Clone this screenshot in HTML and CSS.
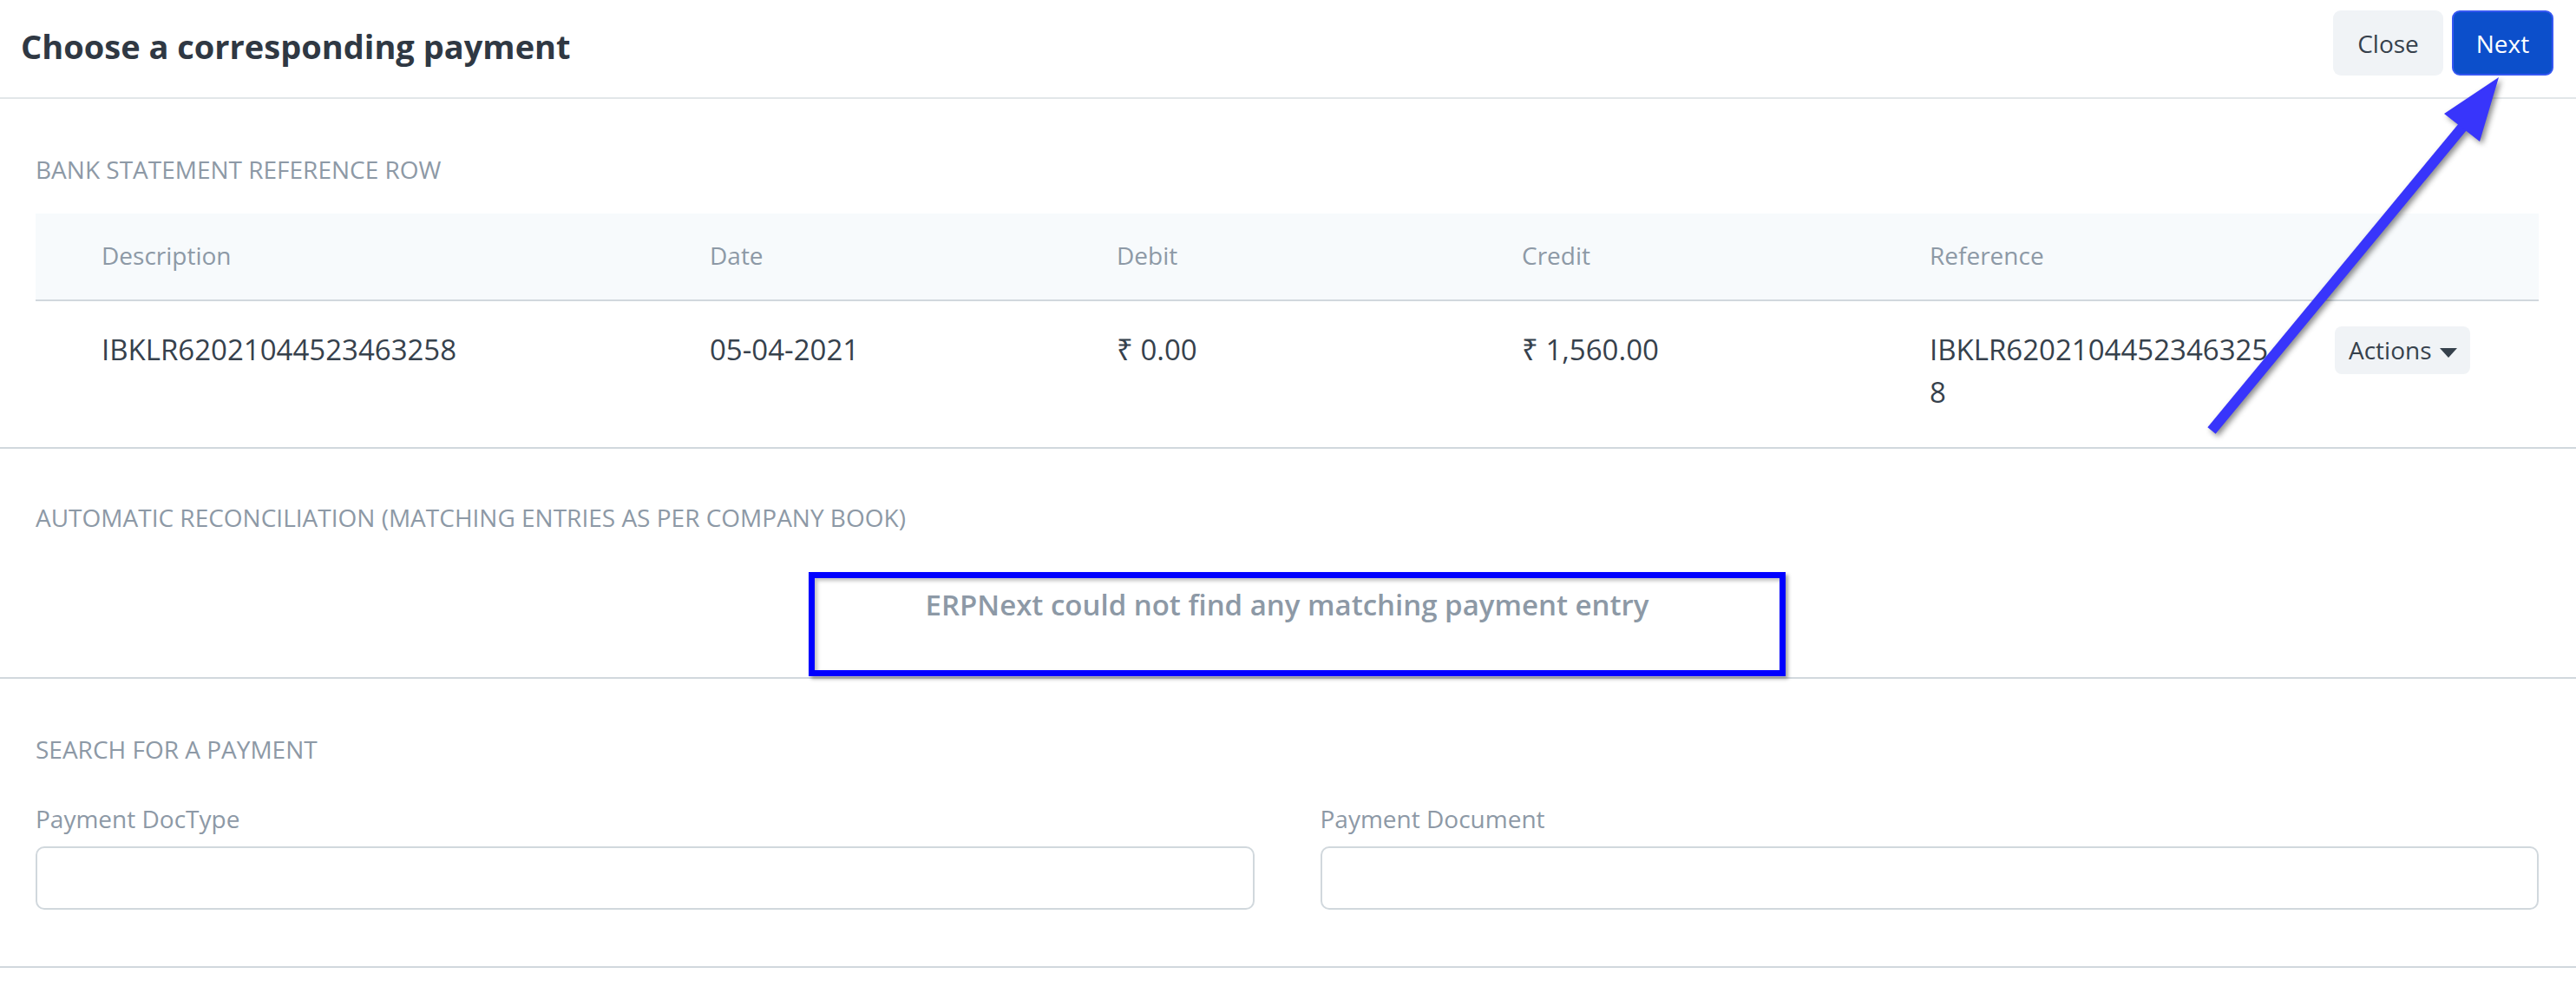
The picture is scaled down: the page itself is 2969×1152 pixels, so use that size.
FILE: index.html
```html
<!DOCTYPE html>
<html lang="en">
<head>
<meta charset="utf-8">
<title>Choose a corresponding payment</title>
<link rel="stylesheet" href="styles.css">
</head>
<body>
<div class="modal">
  <header class="modal-header">
    <h1 class="modal-title">Choose a corresponding payment</h1>
    <div class="header-actions">
      <button class="btn btn-secondary">Close</button>
      <button class="btn btn-primary">Next</button>
    </div>
  </header>

  <section class="section section-statement">
    <div class="section-label">BANK STATEMENT REFERENCE ROW</div>
    <div class="dt">
      <div class="dt-head">
        <div class="dt-cell">Description</div>
        <div class="dt-cell">Date</div>
        <div class="dt-cell">Debit</div>
        <div class="dt-cell">Credit</div>
        <div class="dt-cell">Reference</div>
        <div class="dt-cell"></div>
      </div>
      <div class="dt-row">
        <div class="dt-cell">IBKLR62021044523463258</div>
        <div class="dt-cell">05-04-2021</div>
        <div class="dt-cell">₹ 0.00</div>
        <div class="dt-cell">₹ 1,560.00</div>
        <div class="dt-cell dt-ref">IBKLR62021044523463258</div>
        <div class="dt-cell dt-actions">
          <button class="btn-actions">Actions<span class="caret"></span></button>
        </div>
      </div>
    </div>
  </section>

  <section class="section section-auto">
    <div class="section-label">AUTOMATIC RECONCILIATION (MATCHING ENTRIES AS PER COMPANY BOOK)</div>
    <div class="empty-msg">ERPNext could not find any matching payment entry</div>
    <div class="highlight-box"></div>
  </section>

  <section class="section section-search">
    <div class="section-label">SEARCH FOR A PAYMENT</div>
    <div class="fields">
      <div class="field">
        <div class="field-label">Payment DocType</div>
        <div class="input"></div>
      </div>
      <div class="field">
        <div class="field-label">Payment Document</div>
        <div class="input"></div>
      </div>
    </div>
  </section>

  <svg class="annotation-arrow" viewBox="2530 70 370 450" width="370" height="450" xmlns="http://www.w3.org/2000/svg">
    <line x1="2549" y1="496" x2="2841" y2="143" stroke="#3835fb" stroke-width="12" stroke-linecap="butt"/>
    <polygon points="2880,89 2817,131 2858,163" fill="#3835fb"/>
  </svg>
</div>
</body>
</html>
```

FILE: styles.css
```css
* {
  box-sizing: border-box;
}

body {
  margin: 0;
  background: #ffffff;
  font-family: "Open Sans", "Noto Sans", "DejaVu Sans", sans-serif;
  color: #36414c;
}

.modal {
  position: relative;
  width: 2969px;
  min-height: 1152px;
}

.modal-header {
  display: flex;
  justify-content: space-between;
  align-items: flex-start;
  height: 114px;
  padding: 0 26px 0 24px;
  border-bottom: 2px solid #e2e6e9;
}

.modal-title {
  margin: 27px 0 0;
  font-size: 38px;
  font-weight: 700;
  line-height: 52px;
  color: #2f3843;
}

.header-actions {
  display: flex;
  gap: 10px;
  margin-top: 12px;
}

.btn {
  height: 75px;
  padding: 0;
  font-family: inherit;
  font-size: 28px;
  line-height: 1;
  border-radius: 9px;
  border: 2px solid transparent;
}

.btn-secondary {
  width: 127px;
  background: #f0f3f6;
  color: #36414c;
}

.btn-primary {
  width: 117px;
  background: #0c4fcb;
  border-color: #3557f2;
  color: #ffffff;
}

.section {
  position: relative;
  padding: 0 43px 0 41px;
  border-bottom: 2px solid #d1d8dd;
}

.section-label {
  font-size: 28px;
  line-height: 40px;
  color: #8d99a6;
}

/* bank statement section */
.section-statement {
  padding-top: 61px;
}

.section-statement .section-label {
  margin-bottom: 31px;
}

.dt-head,
.dt-row {
  display: grid;
  grid-template-columns: 701px 469px 467px 470px 474px 304px;
}

.dt-head {
  height: 101px;
  background: #f7fafc;
  border-bottom: 2px solid #d1d8dd;
}

.dt-head .dt-cell {
  padding: 28px 0 0 76px;
  font-size: 28px;
  line-height: 40px;
  color: #8d99a6;
}

.dt-row {
  height: 168px;
}

.dt-row .dt-cell {
  padding: 31px 0 0 76px;
  font-size: 33px;
  line-height: 49px;
  color: #36414c;
}

.dt-row .dt-ref {
  word-break: break-all;
}

.dt-row .dt-actions {
  padding: 29px 0 0 69px;
}

.btn-actions {
  display: inline-flex;
  align-items: center;
  height: 55px;
  padding: 0 15px 0 16px;
  border: none;
  border-radius: 8px;
  background: #f0f3f6;
  font-family: inherit;
  font-size: 28px;
  line-height: 55px;
  color: #36414c;
}

.caret {
  display: inline-block;
  width: 0;
  height: 0;
  margin: 6px 0 0 9px;
  border-left: 10px solid transparent;
  border-right: 10px solid transparent;
  border-top: 11px solid #36414c;
}

/* automatic reconciliation section */
.section-auto {
  padding-top: 59px;
  padding-bottom: 60px;
}

.empty-msg {
  margin-top: 58px;
  text-align: center;
  font-size: 33px;
  font-weight: 600;
  line-height: 46px;
  color: #8d99a6;
}

.highlight-box {
  position: absolute;
  left: 932px;
  top: 142px;
  width: 1126px;
  height: 120px;
  border: 7px solid #0000ff;
  box-shadow: 3px 3px 4px rgba(0, 0, 0, 0.35), inset 3px 3px 4px rgba(0, 0, 0, 0.25);
  pointer-events: none;
}

/* search section */
.section-search {
  padding-top: 61px;
  padding-bottom: 65px;
}

.fields {
  display: grid;
  grid-template-columns: 1fr 1fr;
  column-gap: 76px;
  margin-top: 40px;
}

.field-label {
  font-size: 28px;
  line-height: 40px;
  color: #8d99a6;
  margin-bottom: 12px;
}

.input {
  height: 73px;
  border: 2px solid #d1d8dd;
  border-radius: 10px;
  background: #ffffff;
}

/* annotation arrow */
.annotation-arrow {
  position: absolute;
  left: 2530px;
  top: 70px;
  overflow: visible;
  pointer-events: none;
  filter: drop-shadow(3px 3px 3px rgba(0, 0, 0, 0.45));
}
```
